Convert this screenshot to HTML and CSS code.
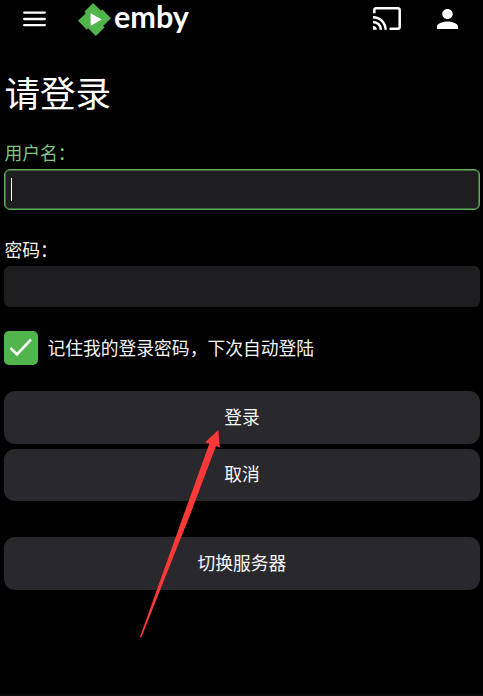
FILE: index.html
```html
<!DOCTYPE html>
<html lang="zh-CN">
<head>
<meta charset="utf-8">
<title>Emby</title>
<link rel="stylesheet" href="styles.css">
</head>
<body>
<header class="header">
  <svg class="menu" viewBox="0 0 24 18"><path d="M2.2 2.6H22.8M2.2 9H22.8M2.2 15.2H22.8" fill="none" stroke="currentColor" stroke-width="2.3" stroke-linecap="round"/></svg>
  <div class="brand">
    <svg class="logo" viewBox="0 0 24 24"><path fill="#fff" d="M8 6h10v12H8z"/><path fill="#52b54b" d="M11.041 0c-.007 0-1.456 1.43-3.219 3.176L4.615 6.352l.512.513.512.512-2.819 2.791L0 12.961l1.83 1.848c1.006 1.016 2.438 2.46 3.182 3.209l1.351 1.359.508-.496c.28-.273.515-.498.524-.498.008 0 1.266 1.264 2.794 2.808L12.97 24l.187-.182c.23-.225 5.007-4.95 5.717-5.656l.52-.516-.502-.513c-.276-.282-.5-.52-.496-.53.003-.009 1.264-1.26 2.802-2.783 1.538-1.522 2.8-2.776 2.803-2.785.005-.012-3.617-3.684-6.107-6.193L17.65 4.6l-.505.505c-.279.278-.517.501-.53.497-.013-.005-1.27-1.267-2.793-2.805A449.655 449.655 0 0 0 11.041 0zM9.223 7.367c.091.038 7.951 4.608 7.957 4.627.003.013-1.781 1.056-3.965 2.32a999.898 999.898 0 0 1-3.996 2.307c-.019.006-.026-1.266-.026-4.629 0-3.7.007-4.634.03-4.625Z"/></svg>
    <svg class="wordmark" viewBox="0 0 78 40"><text x="1" y="27.5" textLength="75" lengthAdjust="spacingAndGlyphs">emby</text></svg>
  </div>
  <svg class="cast" viewBox="0 0 28 23"><g fill="none" stroke="currentColor" stroke-width="2.5"><path d="M1.3 6.3V3.3Q1.3 1.3 3.3 1.3H24.7Q26.7 1.3 26.7 3.3V19.7Q26.7 21.7 24.7 21.7H16.5"/><path d="M0 10.2A12.6 12.6 0 0 1 12.6 22.8M0 14.9A7.9 7.9 0 0 1 7.9 22.8"/></g><path fill="currentColor" d="M0 19A3.9 3.9 0 0 1 3.9 22.8H0z"/></svg>
  <svg class="user" viewBox="4 4 16 16" preserveAspectRatio="none"><path fill="currentColor" d="M12 12c2.21 0 4-1.79 4-4s-1.79-4-4-4-4 1.79-4 4 1.79 4 4 4zm0 2c-2.67 0-8 1.34-8 4v2h16v-2c0-2.66-5.33-4-8-4z"/></svg>
</header>
<main class="login">
  <h1 class="title">请登录</h1>
  <div class="label label-active">用户名：</div>
  <div class="field field-active"><span class="caret"></span></div>
  <div class="label label-password">密码：</div>
  <div class="field"></div>
  <div class="remember">
    <span class="checkbox"><svg viewBox="0 0 34 34"><path d="M6.5 17L13 23.4L27 8.5" fill="none" stroke="#fff" stroke-width="2.6"/></svg></span>
    <span class="remember-text">记住我的登录密码，下次自动登陆</span>
  </div>
  <div class="actions">
    <button class="button">登录</button>
    <button class="button cancel">取消</button>
    <button class="button server">切换服务器</button>
  </div>
</main>
<svg class="pointer" viewBox="0 0 84 210"><path fill="#fb3939" d="M78.3 0L79.8 17.5L76 16L50 85L1.3 207.5L0 207L43.6 85L69.3 13.8L65.2 12.2Z"/></svg>
</body>
</html>
```
FILE: styles.css
```css
* { box-sizing: border-box; }
body {
  position: relative;
  margin: 0;
  height: 696px;
  overflow: hidden;
  background: #000;
  color: #f5f5f5;
  font: 17.8px/24px "Noto Sans CJK SC", sans-serif;
  border-bottom: 2px solid #0a0a0c;
}
svg { display: block; }
.header {
  display: flex;
  align-items: flex-start;
  height: 40px;
  padding: 0 25px 0 22px;
  color: #fff;
}
.menu { width: 24px; height: 18px; margin-top: 10px; }
.brand { display: flex; margin-left: 32px; }
.logo { width: 33px; height: 33px; margin-top: 3px; }
.wordmark { width: 78px; height: 40px; margin-left: 2px; overflow: visible; }
.wordmark text { font: 700 30px Lato, sans-serif; fill: #fff; }
.cast { width: 28px; height: 23px; margin: 7px 0 0 auto; }
.user { width: 21px; height: 20px; margin: 9px 0 0 36px; }
.login { padding: 27px 3.5px 0 4.4px; }
.title { margin: 0; font-size: 35.6px; font-weight: 400; line-height: 50px; color: #fff; }
.label { margin-top: 23px; height: 29px; }
.label-active { color: #7fc57b; }
.label-password { margin-top: 27px; height: 29px; }
.field { display: flex; align-items: center; height: 41px; border-radius: 6px; background: #1e1e20; }
.field-active { border: 1px solid #5daf58; box-shadow: inset 0 0 0 .5px #5daf58; padding-left: 6px; }
.caret { width: 1px; height: 23px; background: #fff; }
.remember { display: flex; align-items: center; gap: 9px; height: 34px; margin-top: 24px; }
.remember-text { padding-bottom: 3px; }
.checkbox { width: 34px; height: 34px; border-radius: 5px; background: #52b54b; }
.actions { display: flex; flex-direction: column; margin-top: 26px; }
.button {
  height: 53px;
  padding: 0 0 4px;
  border: 0;
  border-radius: 11px;
  background: #29282d;
  color: #f7f7f7;
  font: inherit;
}
.cancel { height: 52px; margin-top: 5px; }
.server { margin-top: 36px; }
.pointer { position: absolute; left: 140px; top: 430px; width: 84px; height: 210px; }
```
